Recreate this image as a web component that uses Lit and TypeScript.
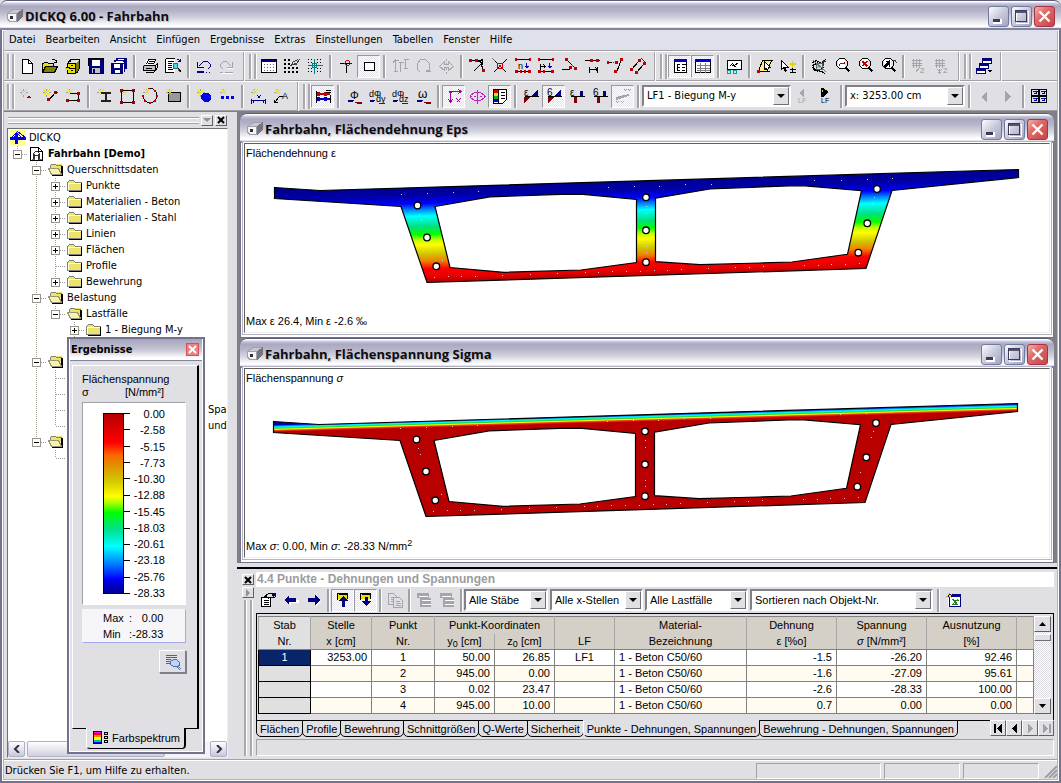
import { LitElement, html, svg, css } from "lit";
import { customElement, property } from "lit/decorators.js";
import { classMap } from "lit/directives/class-map.js";

/* Icon notation: parts separated by "|".
   "colour d" strokes a path, "*colour d" fills it, "@colour x y size text" sets text. */
const SPARK = "#e8e000 M1 1l6 6M7 1L1 7|#a0a090 M4 0v2M4 6v2M0 4h2M6 4h2";
const SPARK_S = "#e8e000 M2 1l5 5M7 1L2 6|#a0a090 M4 0v1M0 4h2";
const WEDGE = "#000080 M1 12h6|#000080 M1 13h5|#800000 M8 14h7|#800000 M10 15h5";
const ICONS: Record<string, string> = {
  doc: "*#fff M3 1h7l4 4v10h-11z|#000 M3 1h6l4 4v10h-10zM9 1v4h4",
  open: "*#e8e000 M1 5h5l1 2h5v8h-11z|*#808000 M4 9h12l-3 6h-12z|#000 M0 14v-9h1l1-1h3l1 1h5v3M0 14l3-6h12l-3 6zM9 2c2-2 4-1 5 1M14 1v3h-3",
  cabinet: "*#e8e000 M3 5h8v10h-8z|*#808000 M11 5l3-3v9l-3 4z|#000 M2 5h8v10h-8zM2 5l3-4h9v9l-3 5M2 10h8M5 7h2M5 12h2M5 1v2|*#e8e000 M0 9h4v3h-4z|#000 M0 9h4",
  save: "*#000080 M1 1h14v14h-14z|*#fff M4 2h8v6h-8z|*#c0c0c0 M4 10h8v5h-8z|*#000080 M5 11h2v4h-2z|#000 M0 0h15v15h-14z",
  saveall: "*#000080 M5 0h11v11h-11z|*#fff M7 1h6v2h-6z|*#000080 M3 2h11v12h-11z|*#fff M5 3h7v2h-7z|*#000080 M0 5h12v11h-12z|*#fff M3 6h6v4h-6zM4 12h5v3h-5z|#fff M12 5v8M2 4h10",
  print: "*#fff M5 1h8l-2 6h-8z|#000 M4 6l2-5h7l-2 5|*#c0c0c0 M1 7h12v6h-12z|#000 M1 7h12l2-2M1 7v5h12v-5M13 12l2-3v-4M3 14h8l2-2M6 3h5M5 5h5M3 10h6|*#e8e000 M8 9h2v1h-2z",
  preview: "*#fff M1 0h9v14h-9z|#000 M0 0h9M0 0v14h8M2 3h6M2 5h4M2 7h4M2 9h4M2 11h5|#000080 M11 2c1-2 3-1 4 1M15 0v3h-3|*#40e0f0 M8 5h5v5h-5z|#606060 M8 5h4v5h-4zM12 10l3 4|#000 M13 10l3 4",
  undo: "#000080 M1 3v6h6M2 8l5-5h4l3 3v2l-3 3|#000080 M0 14h7M9 14h1M12 14h1M0 13h7",
  redo: "#a4a4ac M13 3v6h-6M12 8l-5-5h-3l-3 3v2l3 3M0 14h3M5 14h8|#fff M13 10h-6M1 15h12",
  grid: "*#fff M0 1h16v14h-16z|*#000080 M0 1h16v3h-16z|#000 M0 1h15v13h-15z|*#606060 M3 6h1v1h-1zM6 6h1v1h-1zM9 6h1v1h-1zM12 6h1v1h-1zM3 9h1v1h-1zM6 9h1v1h-1zM9 9h1v1h-1zM12 9h1v1h-1zM3 12h1v1h-1zM6 12h1v1h-1zM9 12h1v1h-1zM12 12h1v1h-1z",
  snapgrid: "*#000 M0 1h2v2h-2zM4 1h2v2h-2zM0 5h2v2h-2zM4 5h2v2h-2zM0 9h2v2h-2zM4 9h2v2h-2zM8 9h2v2h-2zM12 9h2v2h-2zM0 13h2v2h-2zM4 13h2v2h-2zM8 13h2v2h-2zM12 13h2v2h-2z|#404040 M6 8l3-5l5-2M9 5h3l3-4M7 6h5",
  cross: "#008080 M7 0v15M0 7h15M5 5h4v4h-4z|*#000 M1 1h1v1h-1zM4 1h1v1h-1zM10 1h1v1h-1zM13 1h1v1h-1zM1 4h1v1h-1zM13 4h1v1h-1zM1 10h1v1h-1zM13 10h1v1h-1zM1 13h1v1h-1zM4 13h1v1h-1zM10 13h1v1h-1zM13 13h1v1h-1zM4 4h1v1h-1zM10 10h1v1h-1zM10 4h1v1h-1zM4 10h1v1h-1z",
  snap: "#000 M1 5h12M8 5v9|#d00000 M6 5l2-3h2l2 3l-2 2h-2z",
  box: "*#fff M3 3h10v10h-10z|#000 M3 4h10v8h-10z",
  copyI: "#a4a4ac M1 2h5M3 1v12M1 13h4M6 4h5M8 4v9M11 1h5M13 1v9M11 10h4M0 5l3-4",
  rotate: "#a4a4ac M5 14l-3-3v-6l3-4h5l4 4v4M14 12h-4M14 13v-5M10 13h5",
  mirror: "#a4a4ac M8 0v2M8 4v2M8 9v2M8 13v2M6 3l-5 5l5 4v-3h4v3l5-4l-5-5v3h-4z",
  t1: "#000 M0 2h9M4 13l9-9M11 2l3 12M9 3l4-2v5|*#c00000 M0 1h3v3h-3zM6 1h3v3h-3zM13 11h3v3h-3z",
  t2: "#000 M1 1l5 5M14 1l-5 5M1 14l5-5M14 14l-5-5|#c00000 M5 5h5v5h-5z|*#c00000 M7 7h2v2h-2z|#707070 M0 0l3 3",
  t3: "#000 M1 1h13M1 13h13|@#000 3 11 9 n|#0000c0 M11 4v5M9 8h4M10 9h2|*#c00000 M0 0h2v3h-2zM14 0h2v3h-2zM0 12h3v3h-3zM5 12h2v3h-2zM9 12h2v3h-2zM13 12h3v3h-3z",
  t4: "#000 M1 1h13M1 13h13M2 5v6M2 8h5M5 6l2 2l-2 2|#0000c0 M11 4v5M9 8h4M10 9h2|*#c00000 M0 0h2v3h-2zM14 0h2v3h-2zM0 12h3v3h-3zM5 12h2v3h-2zM13 12h3v3h-3z",
  t5: "#000 M0 11h8M5 1l8 8|#00a000 M8 11l3-4|*#c00000 M4 0h3v3h-3zM8 8h3v3h-3zM13 9h3v3h-3z",
  t6: "#000 M0 2h15M5 8v6M5 11h8M11 9l2 2l-2 2M13 8v6|*#c00000 M6 1h3v3h-3zM12 1h3v3h-3z",
  t7: "#000 M0 4h4M14 1l-5 13|#c00000 M5 4h1M8 4h1|*#c00000 M0 3h2v3h-2zM8 3h3v3h-3zM13 0h3v3h-3zM7 12h3v3h-3z",
  t8: "#000 M1 11l8-9M6 14l8-9|#303030 M11 0l4 4|*#c00000 M0 10h3v3h-3zM8 1h3v3h-3zM5 13h3v3h-3zM13 4h3v3h-3z",
  navi: "*#fff M2 1h13v14h-13z|#000 M2 1h12v13h-12zM5 5v7M5 6h2M5 9h2M5 12h2M9 6h4M9 9h3M9 12h3|*#0000c0 M2 1h13v3h-13z",
  tablev: "*#fff M0 1h16v14h-16z|#000 M0 1h15v13h-15z|#808080 M1 7h13M1 10h13M1 12h13M5 4v10M10 4v10|*#0000d0 M0 1h16v3h-16z",
  pic: "*#fff M1 2h14v9h-14z|#000 M1 2h14v9h-14zM3 8l3-3l2 2l4-3M3 11l-3 3|#00a0a0 M1 12h3v3h-3zM7 12h3v3h-3z|#000 M5 6l5 3",
  selz: "*#fff080 M5 2h9l-4 11h-9z|#000 M1 13h11M5 2h10M5 2l-4 11M14 2l-4 10|*#fff M7 3v9l2-2l2 4l1-1l-1-3h3z|#000 M7 3v8l2-1l2 4M7 3l6 6h-3|*#c00000 M0 12h3v3h-3z",
  pick: "*#fff M1 2v9l2-2l2 5l2-1l-2-4h3z|#000 M1 2v9l2-2l2 4l1-1l-2-3h4l-7-7|#e8d000 M12 2v7M9 5h6M12 3v5M9 6h6|#000 M9 11h6M12 9v4M9 14h6",
  zw: "#000 M1 4l4-2l5 3l4-4M1 7l6-3M1 9l5 4l7-5M3 12l9 1M2 6v5M9 13l5 2|#606060 M5 5h6v6h-6z|*#40e0e0 M6 7h4v3h-4z|#707070 M11 10l4 4M2 2l10 9|#303030 M10 3h4M12 1v6",
  zr: "*#fff M4 1h7v9h-7z|#000 M5 0h5l3 3v4l-3 3h-5l-3-3v-4z|#c00000 M5 5h5M10 5v-2M5 5v2|#000 M11 9l4 4M12 9l4 4M11 10l4 4",
  zx: "*#fff M4 1h7v9h-7z|#000 M5 0h5l3 3v4l-3 3h-5l-3-3v-4zM11 9l4 4M12 9l4 4M11 10l4 4|#c00000 M5 3l5 5M10 3l-5 5M6 3l5 5M5 4l5 5M9 3l-5 5",
  zp: "*#fff M4 1h7v9h-7z|#000 M5 0h5l3 3v4l-3 3h-5l-3-3v-4zM11 9l4 4M12 9l4 4M11 10l4 4|*#000 M10 2v6l-1 1v-3l-4 5l-2-3l5-4h-3z|#404040 M12 2h3l1 3",
  g2: "#a4a4ac M2 0v9M5 0v9M8 0v9M0 2h10M0 5h10M0 7h10M4 14l4-5|@#909098 9 15 8 2",
  gx2: "#a4a4ac M2 0v9M5 0v9M8 0v9M0 2h10M0 5h10M0 7h10M3 11l4 4M7 11l-4 4M5 10v5|@#909098 9 15 8 2",
  wins: "*#fff M6 1h9v5h-9zM3 5h9v5h-9zM0 10h9v5h-9z|#000080 M6 1h9v4h-9zM3 6h9v4h-9zM0 11h9v4h-9z|*#000080 M6 0h10v3h-10zM3 5h10v3h-10zM0 10h10v3h-10z|*#000 M11 12h5l-2 3z",
  nP: SPARK + "|*#a00000 M9 8h2v2h-2zM8 9h4v1h-4z",
  nL: SPARK + "|#000 M6 12l7-8|#a00000 M5 12h1M13 4h2|*#a00000 M12 3h3v3h-3zM5 10h3v3h-3z",
  nPo: SPARK_S + "|#000 M4 5h9v7h-11|*#a00000 M12 4h3v3h-3zM12 11h3v3h-3zM1 11h3v3h-3z",
  nI: SPARK_S + "|*#202020 M5 4h10v2h-4v6h4v2h-10v-2h4v-6h-4z",
  nR: SPARK_S + "|#000 M2 2h12v12h-12z|*#a00000 M1 1h3v3h-3zM13 1h3v3h-3zM1 13h3v3h-3zM13 13h3v3h-3z",
  nC: SPARK_S + "|#000 M6 0h4l4 4v6l-4 4h-5l-4-4v-4|*#c00000 M6 0h2v1h-2zM12 2h2v2h-2zM14 7h2v2h-2zM12 12h2v2h-2zM7 14h2v2h-2zM2 12h2v2h-2zM0 7h2v2h-2z",
  nB: "*#989898 M3 4h13v10h-13z|#000 M3 4h12v9h-12z|" + SPARK_S,
  nD: SPARK + "|*#0000e8 M7 5h5l3 3v3l-3 3h-4l-3-3v-4z",
  nDD: SPARK_S + "|*#0000e8 M2 8h3v3h-3zM7 8h3v3h-3zM12 8h3v3h-3z",
  nM: SPARK_S + "|#000080 M1 10v5M15 10v5M1 12h14M3 11v3M13 11v3M7 7l3 3M10 7l-3 3",
  nA: SPARK_S + "|#000 M1 14l5-6h3M1 11v3h3|@#000 9 11 9 A",
  bars: "*#c00000 M1 5h14v2h-14zM2 4h3v4h-3zM9 4h3v4h-3z|*#0000c0 M1 10h14v2h-14zM2 9h3v4h-3zM9 9h3v4h-3z|#000 M1 2v12M10 2h5M10 4h5M15 6v8",
  phi: "@#000 4 11 11 Φ|" + WEDGE,
  dphiy: "@#000 0 9 9 dΦ|@#000 7 14 9 dy|#000080 M0 12h5|#000080 M0 13h4|#800000 M9 15h6",
  dphiz: "@#000 0 9 9 dΦ|@#000 7 14 9 dz|#000080 M0 12h5|#000080 M0 13h4|#800000 M9 15h6",
  omega: "@#000 3 10 12 ω|" + WEDGE,
  axes: "#a000a0 M4 13v-10h10M2 11l2 3l2-3M12 1l3 2l-3 2M10 10l4 4M14 10l-4 4|#a000a0 M3 3h2v1h-2z",
  ell: "#c020c0 M5 4h6l4 3v2l-4 3h-6l-4-3v-2zM8 1v14M0 8h2M4 8h2M10 8h2M14 8h2",
  spec: "*#fff M1 1h13v14h-13z|*#e00000 M2 2h4v3h-4z|*#e0e000 M2 5h4v3h-4z|*#00c000 M2 8h4v3h-4z|*#0000e0 M2 11h4v3h-4z|#000 M1 1h13v10l-4 4h-9zM8 4h4M8 7h4M8 10h4M6 1v14",
  e1: "@#000 1 8 10 ε|*#800000 M1 9h6l-6 6z|*#000080 M15 2v6h-7z|#000 M1 8h14",
  e2: "@#000 1 8 10 6|*#800000 M2 9h6l-6 6z|*#000080 M15 2v6h-7z|#000 M1 8h14",
  e3: "@#000 1 8 10 ε|*#800000 M5 9h3v6h-3z|*#000080 M11 3h3v6h-3z|#000 M1 8h14",
  e4: "@#000 1 8 10 6|*#800000 M5 9h3v6h-3z|*#000080 M11 3h3v6h-3z|#000 M1 8h14",
  e5: "*#a4a4ac M1 9l13-3v2l-13 4z|#a4a4ac M9 1l2 2M11 1l-2 2M13 1l2 2M15 1l-2 2M1 13l2 2M3 13l-2 2M6 13l2 2M8 13l-2 2",
  lfp: "*#a4a4ac M9 0v9l-5-4z|@#a4a4ac 3 15 7 LF",
  lfn: "*#000 M3 0h2l6 4l-6 5h-2z|*#e8e000 M4 2h1v2h-1z|@#000 3 15 7 LF",
  prev: "*#a4a4ac M10 3v11l-6-5z",
  next: "*#a4a4ac M5 3v11l6-5z",
  four: "#000 M0 1h7v6h-7zM8 1h7v6h-7zM0 8h7v6h-7zM8 8h7v6h-7z|#0000e0 M1 3h5M9 3h5M1 10h5M9 10h5|#000080 M2 5h3v-3M10 5h3v-3M2 12h3v-3M10 12h3v-3",
  props: "*#fff M1 5h10v10h-10z|#000 M1 5h9v9h-9zM3 8h5M3 10h5M3 12h5M3 5l5-4h3l3 4h-4M13 1h2v3M5 4l4 2|*#000080 M12 1h4v3h-2z",
  left: "*#fff M3 9l5 5v-3h8v-3h-12z|*#000080 M1 8l5-5v3h7v4h-7v3z",
  right: "*#fff M1 10h8v3l1 1l5-5z|*#000080 M14 8l-5-5v3h-7v4h7v3z",
  up: "*#e8e000 M3 2h9v5h-9z|#000 M2 7v-6h10v5M3 1h9M3 2h9|*#000080 M8 4l5 5h-3v6h-3v-6h-4z",
  down: "*#e8e000 M3 2h9v5h-9z|#000 M2 7v-6h10v5M3 1h9M3 2h9|*#000080 M8 14l5-5h-3v-4h-3v4h-4z",
  copy: "#a4a4ac M1 1h5l3 3v8h-8zM3 5h3M3 7h3M3 9h3|*#e0dfe4 M6 5h7l3 3v7h-10z|#a4a4ac M6 5h6l3 3v7h-9zM8 9h4M8 11h5M8 13h5",
  lay: "*#a4a4ac M1 1h12v5h-12zM4 6h11v9h-11z|#fff M5 8h9M5 12h9M2 4h9",
  excel: "*#fff M3 3h13v12h-13z|#000080 M4 4h11v10h-11z|*#000080 M3 2h13v3h-13z|#208020 M7 7l5 6M8 7l5 6M12 7l-6 6M9 8h4M6 12h5|" + SPARK_S,
  lens: "#606060 M0 1h11M0 3h11M0 5h7M0 7h5M0 9h5|*#c0d4f8 M6 5h6l3 3v3l-3 3h-4l-3-3v-3z|#5070b0 M8 5h3l3 3v3l-2 1h-4l-3-2v-3zM13 12l3 3M12 13l3 3",
  spektrum: "*#f0f M0 1h9v3h-9z|*#f00 M0 3h9v2h-9z|*#ff0 M0 7h9v3h-9z|*#f80 M0 5h9v2h-9z|*#0c8 M0 10h9v2h-9z|*#00f M0 12h9v2h-9z|#000 M0 1h8v12h-8zM11 2h3v2h-3zM11 6h3v2h-3zM11 10h3v2h-3z",
  app: "*#a0a0a8 M0 5l6-4h10v8l-6 5h-8l-2-2z|*#c8c8ce M1 5l6-3h8l-5 3z|*#f6f6fa M1 6h8v7h-6l-2-2z|*#75757f M10 5l6-4v8l-6 5z|*#303030 M3 8h3v3h-3z",
  bridge: "*#ffff90 M0 0h16v16h-16z|*#0000e0 M0 7h16v3h-16zM5 3h3v11h-3z|#0000e0 M1 7l6-6l8 6M3 7l4-4l4 4",
  root: "*#fff M1 1h8l4 4v10h-12z|#000 M1 1h8l4 4v9h-12zM9 1v4h4|#303030 M4 13v-6l2-2h2l2 2v6M4 9h6M5 13v-6M9 13v-6|#00b000 M2 13h3M9 13h3",
  folder: "*#ece468 M1 4h13v9h-13z|*#ece468 M3 2h4v2h-5z|#808080 M0 12v-8l2-2h4l2 2h6|#fff M1 11v-6h12|#808080 M0 12h13|#000 M1 13h13v-9",
  folderO: "*#ece468 M3 2h11v10h-11z|#808080 M2 5v-2l1-1h4l1 1h5|*#000 M13 4h2v10h-11v-1h9z|*#f8f4b0 M0 6h11l3 7h-11z|#989880 M0 6h10l3 6h-10zM0 6l3 6",
};

const icon = (name: string, cls = "ic") => html`<svg class=${cls} viewBox="0 0 16 16" aria-hidden="true">${ICONS[name]
  .split("|")
  .map((p) => {
    if (p[0] === "@") {
      const [c, x, y, s, t] = p.slice(1).split(" ");
      return svg`<text x=${x} y=${y} fill=${c} font-size=${s} font-family="Liberation Sans, sans-serif">${t}</text>`;
    }
    const i = p.indexOf(" ");
    const c = p.slice(0, i);
    const d = p.slice(i + 1);
    return c[0] === "*"
      ? svg`<path fill=${c.slice(1)} d=${d}/>`
      : svg`<path fill="none" stroke=${c} transform="translate(.5 .5)" d=${d}/>`;
  })}</svg>`;

const base = css`
  * { box-sizing: border-box; }
  button, select { font: inherit; color: inherit; margin: 0; padding: 0; border: 0; background: none; border-radius: 0; }
  .ic { width: 16px; height: 16px; display: block; flex: none; shape-rendering: crispEdges; overflow: visible; }
  .combo { position: relative; display: block; height: 22px; border: 2px solid; border-color: #808088 #fff #fff #808088; background: #fff; flex: none; }
  .combo select { appearance: none; width: 100%; height: 18px; padding: 0 18px 0 3px; display: block; outline: 0; }
  .combo .drop { position: absolute; right: 0; top: 0; bottom: 0; width: 16px; background: #e0dfe4; border: 1px solid; border-color: #fff #707078 #707078 #fff; pointer-events: none; display: grid; place-items: center; }
  .drop::after { content: ""; border: 4px solid transparent; border-top-color: #000; border-bottom: 0; }
  .tb { width: 23px; height: 23px; display: grid; place-items: center; flex: none; }
  .tb.on { background: repeating-conic-gradient(#fff 0 25%, #e4e3e9 0 50%) 0 0 / 2px 2px; border: 1px solid; border-color: #98989f #fff #fff #98989f; }
  .sep { width: 8px; height: 23px; display: flex; justify-content: center; flex: none; }
  .sep::before { content: ""; width: 2px; background: #a0a0a6; border-right: 1px solid #fff; }
`;

const combo = (label: string, width: number, value: string) => html`
  <label class="combo" style="width:${width}px"><select aria-label=${label}><option>${value}</option></select><span class="drop"></span></label>`;

/* "|" separator, "!" prefix pressed, "#" break between bars */
const tools = (list: string) => list.split(" ").map((t) =>
  t === "|" ? html`<span class="sep"></span>`
  : t === "#" ? html`<span class="edge"></span><span class="grip"></span>`
  : t[0] === "!" ? html`<button class="tb on" aria-pressed="true" aria-label=${t.slice(1)}>${icon(t.slice(1))}</button>`
  : html`<button class="tb" aria-label=${t}>${icon(t)}</button>`);

@customElement("title-bar")
class TitleBar extends LitElement {
  @property() label = "";
  static styles = [base, css`
    :host { display: flex; align-items: center; height: 30px; flex: none; padding: 3px 6px 0 7px; gap: 2px; border-radius: 7px 7px 0 0;
      border-bottom: 2px solid #84839c; border-top: 1px solid #5c5b7c;
      background: linear-gradient(#fff 0, #fff 1px, #cfcfdf 2px, #a9a8c1 5px, #b4b4c9 10px, #d2d2de 17px, #fbfbfd 24px, #fff 26px, #c9c8da 27px); }
    h1 { margin: 0; flex: 1; font: bold 13px/18px "Open Sans", "Noto Sans", sans-serif; color: #0c0c10; white-space: nowrap; overflow: hidden; text-shadow: 1px 1px 1px #b8b8c4; }
    .wb { width: 21px; height: 21px; border-radius: 3px; border: 1px solid #6f7ba0; background: linear-gradient(135deg, #fdfdff, #c9c9dc 50%, #a3a3c2); display: grid; place-items: center; }
    .ctl { display: flex; gap: 2px; }
    .x { border-color: #a8324a; background: linear-gradient(135deg, #f5b0a8, #de6a68 40%, #c84444); }
    .wb svg { width: 19px; height: 19px; shape-rendering: crispEdges; }
    .wb.x svg { shape-rendering: auto; }
  `];
  render() {
    return html`${icon("app")}<h1>${this.label}</h1><div class="ctl">
      <button class="wb" aria-label="Minimieren"><svg viewBox="0 0 19 19"><path fill="#fff" d="M4 12h9v5h-9z"/><path fill="#3c3c58" d="M4 12h7v3h-7z"/></svg></button>
      <button class="wb" aria-label="Maximieren"><svg viewBox="0 0 19 19"><path fill="none" stroke="#fff" d="M4.500 4.500h12v12h-12z"/><path fill="none" stroke="#3c3c58" d="M3.500 3.500h11v11h-11z"/><path fill="#54546e" d="M4 4h10v2h-10z"/></svg></button>
      <button class="wb x" aria-label="Schließen"><svg viewBox="0 0 19 19"><path stroke="#fff" stroke-width="2.400" d="M4.500 4.500l10 10M14.500 4.500l-10 10"/></svg></button></div>`;
  }
}

const SPECTRUM: [number, string][] = [[0, "#b40000"], [8, "#dc0000"], [16, "#ff0000"], [23, "#f86800"], [31, "#dca000"], [38, "#d4cc00"], [46, "#ffff00"], [50, "#a0ff00"], [55, "#00ff00"], [64, "#00e088"], [74, "#00ffff"], [80, "#00b0ff"], [88, "#0040ff"], [92, "#0000ff"], [96, "#0000c0"], [100, "#000098"]];

@customElement("section-plot")
class SectionPlot extends LitElement {
  @property() kind = "eps";
  static styles = [base, css`
    :host { display: flex; flex: 1; min-height: 0; }
    svg { flex: 1; width: 100%; min-height: 0; display: block; overflow: visible; }
  `];
  render() {
    const eps = this.kind === "eps";
    const stops: [number, string][] = eps
      ? [[0, "#000090"], [10, "#0000a8"], [18, "#0000ff"], [24, "#0080ff"], [31, "#00ffff"], [42, "#00e080"], [50, "#00ff00"], [56, "#c0ff00"], [61, "#ffff00"], [70, "#d0c800"], [78, "#f08000"], [86, "#ff0000"], [94, "#e80000"], [100, "#b00000"]]
      : [[0, "#0000a0"], [18, "#0000d0"], [30, "#0080ff"], [42, "#00ffff"], [58, "#20e020"], [70, "#ffff00"], [82, "#ff4000"], [100, "#b80000"]];
    const g = eps ? [646, 180, 648.7, 276] : [645, 179, 645.24, 187.5];
    const bars = [[401, 194], [427, 193], [453, 192], [478, 191], [608, 187], [634, 186], [659, 186], [685, 184], [711, 184], [814, 180], [841, 180], [867, 179], [892, 178], [419, 214], [421, 220], [442, 260], [646, 206], [646, 213], [646, 246], [646, 252], [874, 197], [872, 203], [861, 238], [434, 277], [448, 276], [461, 276], [475, 276], [502, 275], [530, 274], [557, 273], [585, 272], [598, 272], [612, 271], [626, 271], [640, 271], [654, 270], [667, 270], [681, 269], [708, 268], [735, 267], [749, 267], [763, 266], [804, 265], [818, 265], [831, 264], [845, 264], [859, 263]];
    return html`<svg viewBox=${eps ? "245 162 804 151" : "246 153 804 151"} preserveAspectRatio="xMinYMin" role="img" aria-label="Querschnitt">
      <defs><linearGradient id="g" gradientUnits="userSpaceOnUse" x1=${g[0]} y1=${g[1]} x2=${g[2]} y2=${g[3]}>
        ${stops.map(([o, c]) => svg`<stop offset="${o}%" stop-color=${c}/>`)}</linearGradient></defs>
      <path fill="url(#g)" fill-rule="evenodd" stroke="#000" stroke-width="1.200" d="M274.500 187.500L320 190.500L1018.500 169.500V177.500L892 190.500L866 268.500L427 282.500L401 206.500L274.500 198.500Z
        M435 206.500L490 196.800L561 194.300H583L636.500 199.500V262.500L581 270L504 272.300L450 267.500Z
        M655.500 198.200L710 189L790 185.800H805L861.500 190.700L847.500 254.300L792 262L760 263L700 264.700L655.500 261.700Z"/>
      ${bars.map(([x, y]) => svg`<path fill="#d8ccd4" d="M${x} ${y}h1v1h-1z"/>`)}
      ${[[417.5, 205.5], [427, 237.5], [436.3, 266.3], [646, 197.3], [646, 230.3], [646, 262.2], [877, 189], [867.3, 223.3], [858.3, 252.7]].map(([x, y]) => svg`<circle cx=${x} cy=${y} r="3.300" fill="#fff" stroke="#000" stroke-width="1.300"/>`)}
      </svg>`;
  }
}

/* guides: v line, + and - expander, t tee, l corner, p and m expander on the last branch */
type Node = [string, string, string, string?];
const TREE: Node[] = [
  ["", "bridge", "DICKQ"],
  ["m", "root", "Fahrbahn [Demo]", "bold"],
  [" -", "folderO", "Querschnittsdaten"],
  [" v+", "folder", "Punkte"],
  [" v+", "folder", "Materialien - Beton"],
  [" v+", "folder", "Materialien - Stahl"],
  [" v+", "folder", "Linien"],
  [" v+", "folder", "Flächen"],
  [" vt", "folder", "Profile"],
  [" vp", "folder", "Bewehrung"],
  [" -", "folderO", "Belastung"],
  [" vm", "folderO", "Lastfälle"],
  [" v +", "folder", "1 - Biegung M-y"],
  [" v l", "", ""],
  [" -", "folderO", ""],
  [" vt", "", ""],
  [" vt", "", ""],
  [" vt", "", "Spa", "tail"],
  [" vl", "", "und", "tail"],
  [" m", "folderO", ""],
  ["  l", "", ""],
];

@customElement("result-palette")
class ResultPalette extends LitElement {
  static styles = [base, css`
    :host { display: flex; flex-direction: column; background: #e0dfe4; border: 2px solid #72718e; box-shadow: inset 0 0 0 1px #fff; padding: 0 2px 2px; font: 11px/14px "Liberation Sans", sans-serif; }
    header { display: flex; align-items: center; justify-content: space-between; height: 22px; padding: 0 3px 0 1px; margin: 0 -1px; background: linear-gradient(#a5a4be, #c4c4d4 50%, #fff 90%); border-bottom: 1px solid #84839c; font: bold 11px/14px "DejaVu Sans Condensed", "DejaVu Sans", sans-serif; }
    .close { width: 13px; height: 13px; background: #f08080; border: 1px solid #d85050; display: grid; place-items: center; }
    .close svg { width: 9px; height: 9px; }
    .panel { flex: 1; display: flex; flex-direction: column; margin: 4px 2px 0 1px; border: 1px solid; border-color: #fff #000 #000 #fff; border-right-width: 2px; padding: 6px 11px 0 9px; }
    .unit { display: flex; justify-content: space-between; padding-right: 22px; line-height: 12px; }
    .legend { display: flex; height: 203px; margin-top: 4px; background: #fff; border: 1px solid; border-color: #a0a0a6 #fff #fff #a0a0a6; padding: 10px 20px; }
    .bar { width: 20px; border: 1px solid #000; border-width: 1px 0 1px 1px; }
    .ticks { width: 7px; border-left: 1px solid #000; display: flex; flex-direction: column; justify-content: space-between; }
    .ticks i { height: 1px; background: #000; }
    ol { list-style: none; margin: -6px 0; padding: 0; flex: 1; display: flex; flex-direction: column; justify-content: space-between; text-align: right; }
    dl { margin: 4px 0 7px; padding: 0 22px 0 20px; background: #f6f6f8; border: 1px solid; border-color: #f6f6f8 #a8a8f0 #a8a8f0 #f6f6f8; display: grid; grid-template-columns: 26px 1fr; line-height: 16px; white-space: pre; }
    dt, dd { margin: 0; } dd { display: flex; justify-content: space-between; }
    .find { align-self: flex-end; width: 27px; height: 23px; border: 1px solid; border-color: #fff #808088 #808088 #fff; box-shadow: 1px 1px 0 #808088; display: grid; place-items: center; background: #e0dfe4; }
    .tab { align-self: center; display: flex; align-items: center; gap: 3px; height: 21px; margin: -1px 0 1px; padding: 0 4px 0 6px; border: 1px solid #000; border-top: 0; border-left-color: #fff; border-right-width: 2px; border-radius: 0 0 4px 4px; background: #e0dfe4; font: 11px/14px "Liberation Sans", sans-serif; }
  `];
  render() {
    const at = SPECTRUM.map(([o, c]) => `${c} ${o}%`).join(",");
    const vals = ["0.00", "-2.58", "-5.15", "-7.73", "-10.30", "-12.88", "-15.45", "-18.03", "-20.61", "-23.18", "-25.76", "-28.33"];
    return html`
      <header>Ergebnisse<button class="close" aria-label="Schließen"><svg viewBox="0 0 9 9"><path stroke="#fff" stroke-width="2" d="M1 1l7 7M8 1l-7 7"/></svg></button></header>
      <div class="panel">
        <div>Flächenspannung</div>
        <div class="unit"><span>σ</span><span>[N/mm²]</span></div>
        <div class="legend"><div class="bar" style="background:linear-gradient(${at})"></div>
          <div class="ticks">${vals.map(() => html`<i></i>`)}</div>
          <ol>${vals.map((v) => html`<li>${v}</li>`)}</ol></div>
        <dl><dt>Max</dt><dd><span>:</span><span>0.00</span></dd><dt>Min</dt><dd><span>:</span><span>-28.33</span></dd></dl>
        <button class="find" aria-label="Details">${icon("lens")}</button>
      </div>
      <button class="tab">${icon("spektrum")}Farbspektrum</button>`;
  }
}

const ROWS = [
  ["1", "3253.00", "1", "50.00", "26.85", "LF1", "-1.5", "-26.20", "92.46"],
  ["", "", "2", "945.00", "0.00", "", "-1.6", "-27.09", "95.61"],
  ["", "", "3", "0.02", "23.47", "", "-2.6", "-28.33", "100.00"],
  ["", "", "4", "945.00", "10.00", "", "0.7", "0.00", "0.00"],
];

@customElement("result-table")
class ResultTable extends LitElement {
  static styles = [base, css`
    :host { display: flex; gap: 2px; flex: none; padding: 3px 3px 3px 5px; border-top: 2px solid #000; font: 11px/14px "Liberation Sans", sans-serif; }
    .side { width: 12px; display: flex; flex-direction: column; align-items: center; gap: 2px; padding-top: 2px; }
    .mini { width: 12px; height: 11px; border: 1px solid; border-color: #fff #606068 #606068 #fff; background: #e0dfe4; display: grid; place-items: center; flex: none; }
    .mini svg { width: 8px; height: 8px; display: block; }
    .rail { width: 8px; flex: 1; border: solid #a8a8ae; border-width: 0 2px; background: #e0dfe4; box-shadow: inset 1px 0 #fff, 1px 0 #fff; }
    .body { flex: 1; min-width: 0; display: flex; flex-direction: column; }
    h2 { margin: 0 0 1px; background: #fff; color: #9c9ca0; font: bold 12px/15px "Liberation Sans", sans-serif; padding-left: 1px; height: 15px; }
    .bar { display: flex; align-items: center; height: 24px; margin-bottom: 1px; gap: 0; }
    .bar .combo { margin-right: 2px; }
    .bar .sep { width: 6px; }
    .frame { display: flex; border: 1px solid #000; padding: 2px 2px 6px 1px; }
    table { border-collapse: collapse; table-layout: fixed; flex: 1; width: 100%; background: #fff; }
    th { font-weight: normal; background: #d4d0c8; border: 1px solid #a8a8a8; border-top: 1px solid #808080; border-bottom: 0; padding: 0; height: 17px; line-height: 15px; white-space: nowrap; }
    thead tr + tr th { border-top: 0; height: 16px; border-bottom: 1px solid #808080; }
    thead th:first-child { background: #e0e0e0; }
    td { height: 16px; padding: 0 4px; line-height: 15px; border: 1px solid #808080; text-align: right; white-space: nowrap; overflow: hidden; }
    td.c { text-align: center; } td.l { text-align: left; }
    tbody tr:nth-child(even) td { background: #fffbf0; }
    tbody tr td.h { background: #e0e0e0; border: 1px solid #000; text-align: center; }
    tbody tr:nth-child(even) td.h { background: #e0e0e0; }
    tbody tr td.sel { background: #0a246a; color: #fff; }
    sub { font-size: 9px; line-height: 0; vertical-align: -2px; }
    .scroll { width: 17px; display: flex; flex-direction: column; background: repeating-conic-gradient(#fff 0 25%, #dcdbe2 0 50%) 0 0 / 2px 2px; }
    .scroll button, .nav button { border: 1px solid; border-color: #fff #606068 #606068 #fff; background: #e0dfe4; display: grid; place-items: center; height: 16px; }
    .scroll .thumb { height: 7px; margin-top: 2px; border: 1px solid; border-color: #fff #707078 #707078 #fff; background: #e0dfe4; }
    .scroll .fill { flex: 1; }
    .scroll svg { width: 7px; height: 4px; }
    .foot { display: flex; justify-content: space-between; margin-top: -1px; height: 17px; }
    .tabs { display: flex; }
    .tabs button { height: 17px; padding: 0 3px; line-height: 16px; border: 1px solid #000; border-radius: 0 0 5px 5px; margin-right: -1px; white-space: nowrap; background: #e0dfe4; }
    .tabs .act { border-top-color: #e0dfe4; border-left-color: #fff; }
    .nav { display: flex; } .nav button { width: 16px; height: 16px; }
    .nav svg { width: 9px; height: 9px; shape-rendering: crispEdges; }
    .note { height: 17px; margin-top: 2px; border: 1px solid; border-color: #a0a0a6 #fff #fff #a0a0a6; }
  `];
  render() {
    const nav: [string, string][] = [["M0 0h2v9h-2zM8 0v9l-5-4.500z", "#000"], ["M7 0v9l-5-4.500z", "#000"], ["M2 0v9l5-4.500z", "#a0a0a8"], ["M1 0v9l5-4.500zM7 0h2v9h-2z", "#a0a0a8"]];
    const tabs = ["Flächen", "Profile", "Bewehrung", "Schnittgrößen", "Q-Werte", "Sicherheit", "Punkte - Dehnungen, Spannungen", "Bewehrung - Dehnungen, Spannungen"];
    return html`
      <div class="side"><button class="mini" aria-label="Schließen"><svg viewBox="0 0 8 8"><path stroke="#000" stroke-width="2" d="M1 1l6 6M7 1l-6 6"/></svg></button>
        <button class="mini" aria-label="Erweitern"><svg viewBox="0 0 8 8"><path fill="#909098" d="M2 0v8l4-4z"/></svg></button><div class="rail"></div></div>
      <div class="body">
        <h2>4.4 Punkte - Dehnungen und Spannungen</h2>
        <div class="bar">${tools("props left right | !up !down | copy | lay lay |")}
          ${combo("Stäbe", 84, "Alle Stäbe")}${combo("x-Stellen", 93, "Alle x-Stellen")}${combo("Lastfälle", 103, "Alle Lastfälle")}${combo("Sortierung", 183, "Sortieren nach Objekt-Nr.")}
          ${tools("| excel")}</div>
        <div class="frame">
          <table>
            <colgroup>${[52, 61, 63, 60, 60, 60, 132, 90, 90, 90].map((w) => html`<col style="width:${w}px">`)}<col></colgroup>
            <thead>
              <tr><th>Stab</th><th>Stelle</th><th>Punkt</th><th colspan="2">Punkt-Koordinaten</th><th></th><th>Material-</th><th>Dehnung</th><th>Spannung</th><th>Ausnutzung</th><th></th></tr>
              <tr><th>Nr.</th><th>x [cm]</th><th>Nr.</th><th>y<sub>0</sub> [cm]</th><th>z<sub>0</sub> [cm]</th><th>LF</th><th>Bezeichnung</th><th>ε [%o]</th><th><i>σ</i> [N/mm²]</th><th>[%]</th><th></th></tr>
            </thead>
            <tbody>${ROWS.map((r, i) => html`<tr><td class=${classMap({ h: true, sel: i === 0 })}>${r[0]}</td><td>${r[1]}</td><td class="c">${r[2]}</td><td>${r[3]}</td><td>${r[4]}</td><td class="c">${r[5]}</td><td class="l">1 - Beton C50/60</td><td>${r[6]}</td><td>${r[7]}</td><td>${r[8]}</td><td></td></tr>`)}</tbody>
          </table>
          <div class="scroll"><button aria-label="Nach oben"><svg viewBox="0 0 7 4"><path d="M0 4l3.500-4l3.500 4z"/></svg></button><div class="thumb"></div><div class="fill"></div><button aria-label="Nach unten"><svg viewBox="0 0 7 4"><path d="M0 0l3.500 4l3.500-4z"/></svg></button></div>
        </div>
        <div class="foot"><div class="tabs">${tabs.map((t, i) => html`<button class=${classMap({ act: i === 6 })}>${t}</button>`)}</div>
          <div class="nav">${nav.map(([d, c]) => html`<button aria-label="Blättern"><svg viewBox="0 0 9 9"><path fill=${c} d=${d}/></svg></button>`)}</div></div>
        <div class="note"></div>
      </div>`;
  }
}

@customElement("app-root")
class AppRoot extends LitElement {
  static styles = [base, css`
    :host { display: flex; flex-direction: column; height: 100vh; overflow: hidden; box-sizing: border-box; background: #e0dfe4; color: #000; font: 11px/14px "DejaVu Sans Condensed", "Liberation Sans", sans-serif; position: relative; }
    .frame { flex: 1; min-height: 0; display: flex; flex-direction: column; border: solid #72718e; border-width: 0 2px 2px; box-shadow: inset 0 0 0 1px #fff, inset 0 0 0 2px #b4b3c6; padding: 0 2px 2px; }
    nav { display: flex; height: 21px; align-items: center; background: #dfe1ea; border-bottom: 1px solid #a0a0a6; }
    nav button { padding: 0 5px; height: 18px; }
    .menu { display: flex; }
    .tools { display: flex; align-items: center; height: 30px; padding-left: 3px; border-top: 1px solid #fff; border-bottom: 1px solid #a0a0a6; flex: none; }
    .grip { width: 7px; height: 25px; flex: none; margin-right: 1px; border: solid #a8a8ae; border-width: 0 2px; background: #e0dfe4; box-shadow: inset 1px 0 #fff, 1px 0 #fff; }
    .edge { width: 11px; height: 29px; flex: none; border-right: 5px solid transparent; display: flex; justify-content: flex-end; }
    .edge::before { content: ""; width: 1px; background: #a0a0a6; box-shadow: 1px 0 #fff; }
    .work { flex: 1; min-height: 0; display: flex; border-top: 1px solid #808080; }
    aside { width: 233px; flex: none; display: flex; flex-direction: column; padding: 0 9px 1px 3px; position: relative; }
    .ph { display: flex; align-items: center; height: 16px; gap: 2px; padding: 0 1px; }
    .lines { flex: 1; height: 7px; border: solid #a0a0a6; border-width: 1px 0; box-shadow: inset 0 1px #fff, inset 0 -1px #fff; }
    .pb { width: 12px; height: 11px; border: 1px solid; border-color: #fff #606068 #606068 #fff; display: grid; place-items: center; }
    .pb svg { width: 8px; height: 8px; }
    .tree { flex: 1; min-height: 0; display: flex; flex-direction: column; background: #fff; border: 1px solid; border-color: #707070 #f0f0e4 #f0f0e4 #707070; overflow: hidden; }
    ul { flex: 1; list-style: none; margin: 0; padding: 1px 0 0; overflow: hidden; }
    li { display: flex; height: 16px; align-items: center; white-space: nowrap; }
    .lab { line-height: 16px; padding-left: 2px; }
    .lab.bold { font-weight: bold; }
    .lab.tail { margin-left: auto; padding: 0; width: 19px; }
    .g { width: 19px; height: 16px; flex: none; display: block; }
    .ni { width: 19px; flex: none; display: grid; place-items: center; }
    .hs { display: flex; height: 16px; flex: none; background: #f4f4f8; gap: 2px; }
    .hs button { width: 17px; border: 1px solid #b0b0c4; border-radius: 2px; background: linear-gradient(#fff, #c8c8dc); display: grid; place-items: center; }
    .hs svg { width: 8px; height: 8px; }
    .hs .th { width: 138px; border: 1px solid #b0b0c4; border-radius: 2px; background: linear-gradient(#fff, #d0d0e0); }
    .hs .sp { flex: 1; }
    result-palette { position: absolute; left: 63px; bottom: 5px; width: 138px; height: 417px; z-index: 2; }
    main { flex: 1; min-width: 0; display: flex; flex-direction: column; }
    .mdi { flex: 1; min-height: 0; display: flex; flex-direction: column; background: #807f88; border-left: 3px solid #807f88; padding: 1px 3px 0 0; margin-bottom: 4px; }
    .win { flex: 1; min-height: 0; display: flex; flex-direction: column; background: #fff; border: solid #72718e; border-width: 0 1px 1px; border-radius: 8px 8px 0 0; }
    .win title-bar { margin: 0 -1px; }
    .view { flex: 1; min-height: 0; display: flex; flex-direction: column; margin: 0 3px 4px; border: 1px solid; border-color: #606060 #f0f0e4 #f0f0e4 #606060; box-shadow: 0 0 0 1px #fff, 0 0 0 2px #b4b3c6; font: 11px/14px "Liberation Sans", sans-serif; padding: 2px 0; }
    .cap { flex: none; display: block; height: 16px; padding-left: 1px; }
    sup { font-size: 9px; line-height: 0; vertical-align: 4px; }
    .status { display: flex; align-items: center; height: 20px; flex: none; border-top: 1px solid #a0a0a6; box-shadow: inset 0 1px #fff; padding: 3px 0 0 1px; gap: 3px; }
    .status .msg { flex: 1; }
    .cell { height: 16px; border: 1px solid; border-color: #a0a0a6 #fff #fff #a0a0a6; }
    .w1 { width: 125px; } .w2 { width: 76px; }
    .size { width: 13px; height: 14px; margin-left: 2px; }
  `];

  guide(c: string) {
    const box = "+-pm".includes(c);
    const end = "pml".includes(c);
    const v = c !== " ";
    const h = v && c !== "v";
    return html`<svg class="g" viewBox="0 0 19 16" shape-rendering="crispEdges" aria-hidden="true">
      ${v ? svg`<path d="M9.500 0V${end ? 8 : 16}" stroke="#a09c90" stroke-dasharray="1 1"/>` : ""}
      ${h ? svg`<path d="M10 8.500H19" stroke="#a09c90" stroke-dasharray="1 1"/>` : ""}
      ${box ? svg`<path d="M5.500 4.500h8v8h-8z" fill="#fff" stroke="#98948a"/><path d="M7 8.500h5${"+p".includes(c) ? "M9.500 6v5" : ""}" stroke="#000"/>` : ""}</svg>`;
  }

  render() {
    const menu = ["Datei", "Bearbeiten", "Ansicht", "Einfügen", "Ergebnisse", "Extras", "Einstellungen", "Tabellen", "Fenster", "Hilfe"];
    return html`
      <title-bar label="DICKQ 6.00 - Fahrbahn"></title-bar>
      <div class="frame">
        <nav><div class="menu">${menu.map((m) => html`<button>${m}</button>`)}</div></nav>
        <div class="tools"><span class="grip"></span>${tools("doc open cabinet save saveall | print preview | undo redo # grid snapgrid cross | snap !box | copyI rotate mirror | t1 t2 t3 t4 t5 t6 t7 t8 # !navi !tablev | pic | selz pick | zw zr zx zp | g2 gx2 # wins")}<span class="edge"></span></div>
        <div class="tools"><span class="grip"></span>${tools("nP nL nPo | nI nR nC nB | nD nDD | nM nA # !bars | phi dphiy dphiz omega | !axes ell !spec | e1 !e2 e3 e4 !e5 |")}
          ${combo("Lastfall", 149, "LF1 - Biegung M-y")}${tools("lfp lfn |")}${combo("Stelle", 120, "x: 3253.00 cm")}${tools("| prev next | four")}</div>
        <div class="work">
          <aside>
            <div class="ph"><div class="lines"></div><button class="pb" aria-label="Menü"><svg viewBox="0 0 8 8"><path fill="#909098" d="M0 2h8l-4 4z"/></svg></button><button class="pb" aria-label="Schließen"><svg viewBox="0 0 8 8"><path stroke="#000" stroke-width="2" d="M1 1l6 6M7 1l-6 6"/></svg></button></div>
            <div class="tree"><ul>${TREE.map(([g, ic, label, kind]) => html`<li>${[...g].map((c) => this.guide(c))}${ic ? html`<div class="ni">${icon(ic)}</div>` : ""}<span class="lab ${kind ?? ""}">${label}</span></li>`)}</ul>
              <div class="hs"><button aria-label="Nach links"><svg viewBox="0 0 8 8"><path fill="none" stroke="#303040" stroke-width="2" d="M6 0L2 4l4 4"/></svg></button><div class="th"></div><div class="sp"></div><button aria-label="Nach rechts"><svg viewBox="0 0 8 8"><path fill="none" stroke="#303040" stroke-width="2" d="M2 0l4 4l-4 4"/></svg></button></div></div>
            <result-palette></result-palette>
          </aside>
          <main>
            <div class="mdi">
              <section class="win"><title-bar label="Fahrbahn, Flächendehnung Eps"></title-bar>
                <div class="view"><span class="cap">Flächendehnung ε</span><section-plot kind="eps"></section-plot><span class="cap">Max ε 26.4, Min ε -2.6 ‰</span></div></section>
              <section class="win"><title-bar label="Fahrbahn, Flächenspannung Sigma"></title-bar>
                <div class="view"><span class="cap">Flächenspannung <i>σ</i></span><section-plot kind="sigma"></section-plot><span class="cap">Max <i>σ</i>: 0.00, Min <i>σ</i>: -28.33 N/mm<sup>2</sup></span></div></section>
            </div>
            <result-table></result-table>
          </main>
        </div>
        <div class="status"><span class="msg">Drücken Sie F1, um Hilfe zu erhalten.</span><span class="cell w1"></span><span class="cell w2"></span><span class="cell w2"></span>
          <svg class="size" viewBox="0 0 13 14"><path stroke="#a0a0a6" stroke-width="2" d="M1 14L13 2M5 14l8-8M9 14l4-4"/></svg></div>
      </div>`;
  }
}
